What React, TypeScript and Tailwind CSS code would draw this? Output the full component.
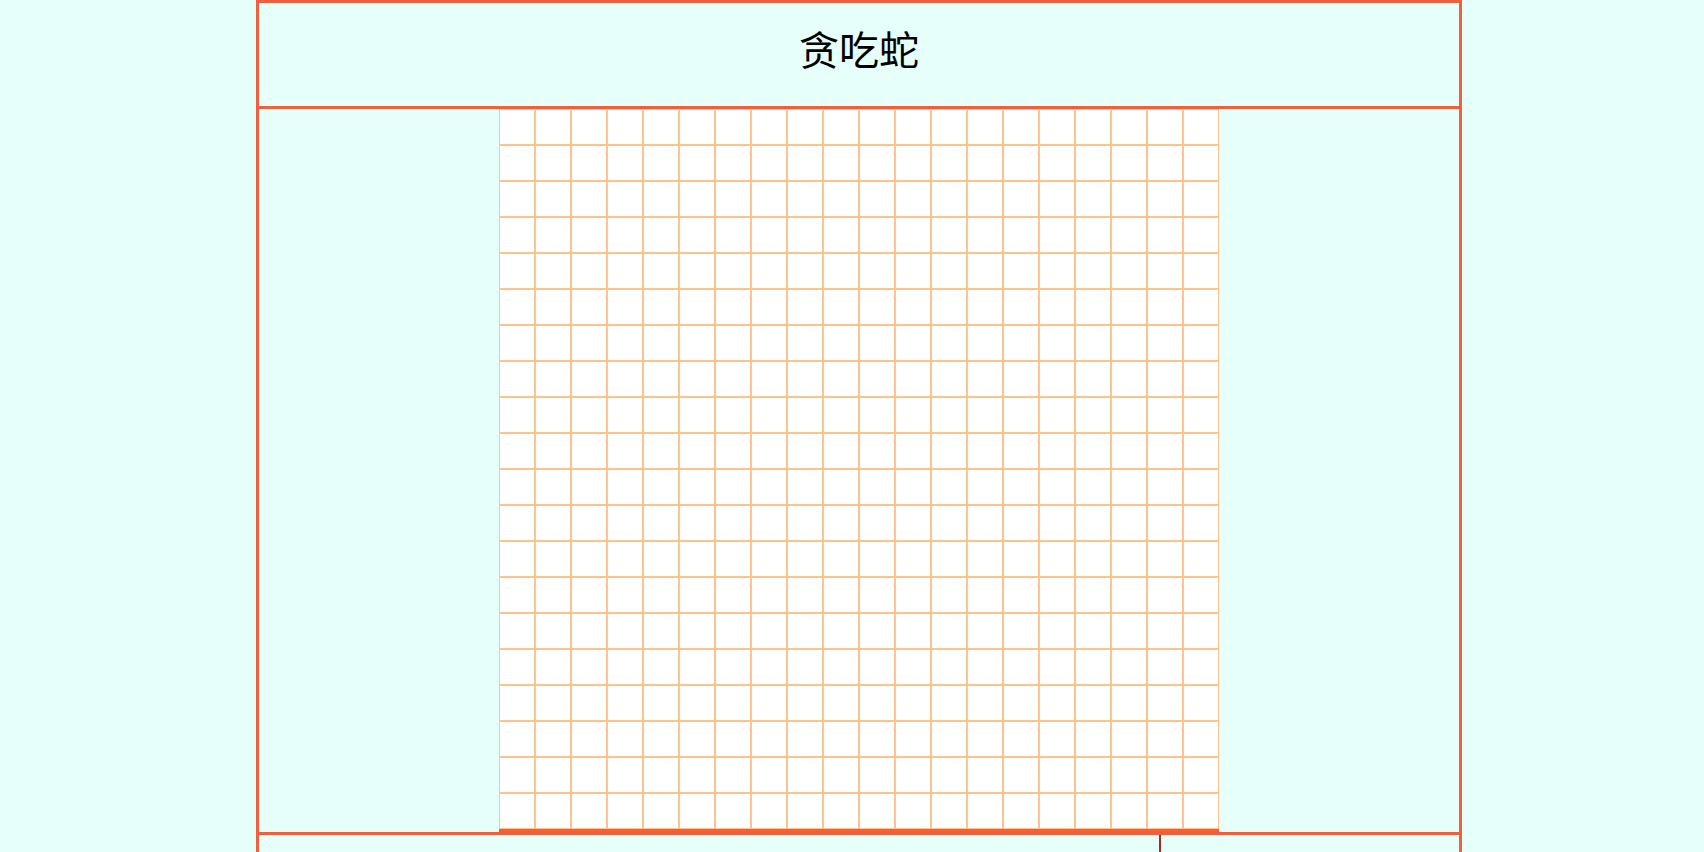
const cells = Array.from({length: 400}, (_, i) => i);

const Board = () => {
    return (
        <div className="border-b-[3px] border-[#ff5a30] bg-white">
            <div className="grid grid-cols-[repeat(20,36px)] grid-rows-[repeat(20,36px)]">
                {cells.map((i) => (
                    <div key={i} className="border-[1.5px] border-[#fec48c] bg-white"></div>
                ))}
            </div>
        </div>
    );
};

const App = () => {
    return (
        <div className="h-screen overflow-hidden bg-[#e6fffb] font-['Noto_Sans_CJK_SC',sans-serif]">
            <div className="ml-[256px] w-[1206px] border-x-[3px] border-t-[3px] border-[#f0603e]">
                <div className="flex h-[106px] items-center justify-center border-b-[3px] border-[#f0603e] pb-[14px]">
                    <h1 className="text-[40px] leading-none font-normal text-black">贪吃蛇</h1>
                </div>
                <div className="flex border-b-[3px] border-[#f0603e]">
                    <div className="w-[240px]"></div>
                    <Board/>
                    <div className="w-[240px]"></div>
                </div>
                <div className="flex h-[200px]">
                    <div className="w-[900px]"></div>
                    <div className="flex-1 border-l-2 border-[#a82a2a]"></div>
                </div>
            </div>
        </div>
    );
};

export default App;
